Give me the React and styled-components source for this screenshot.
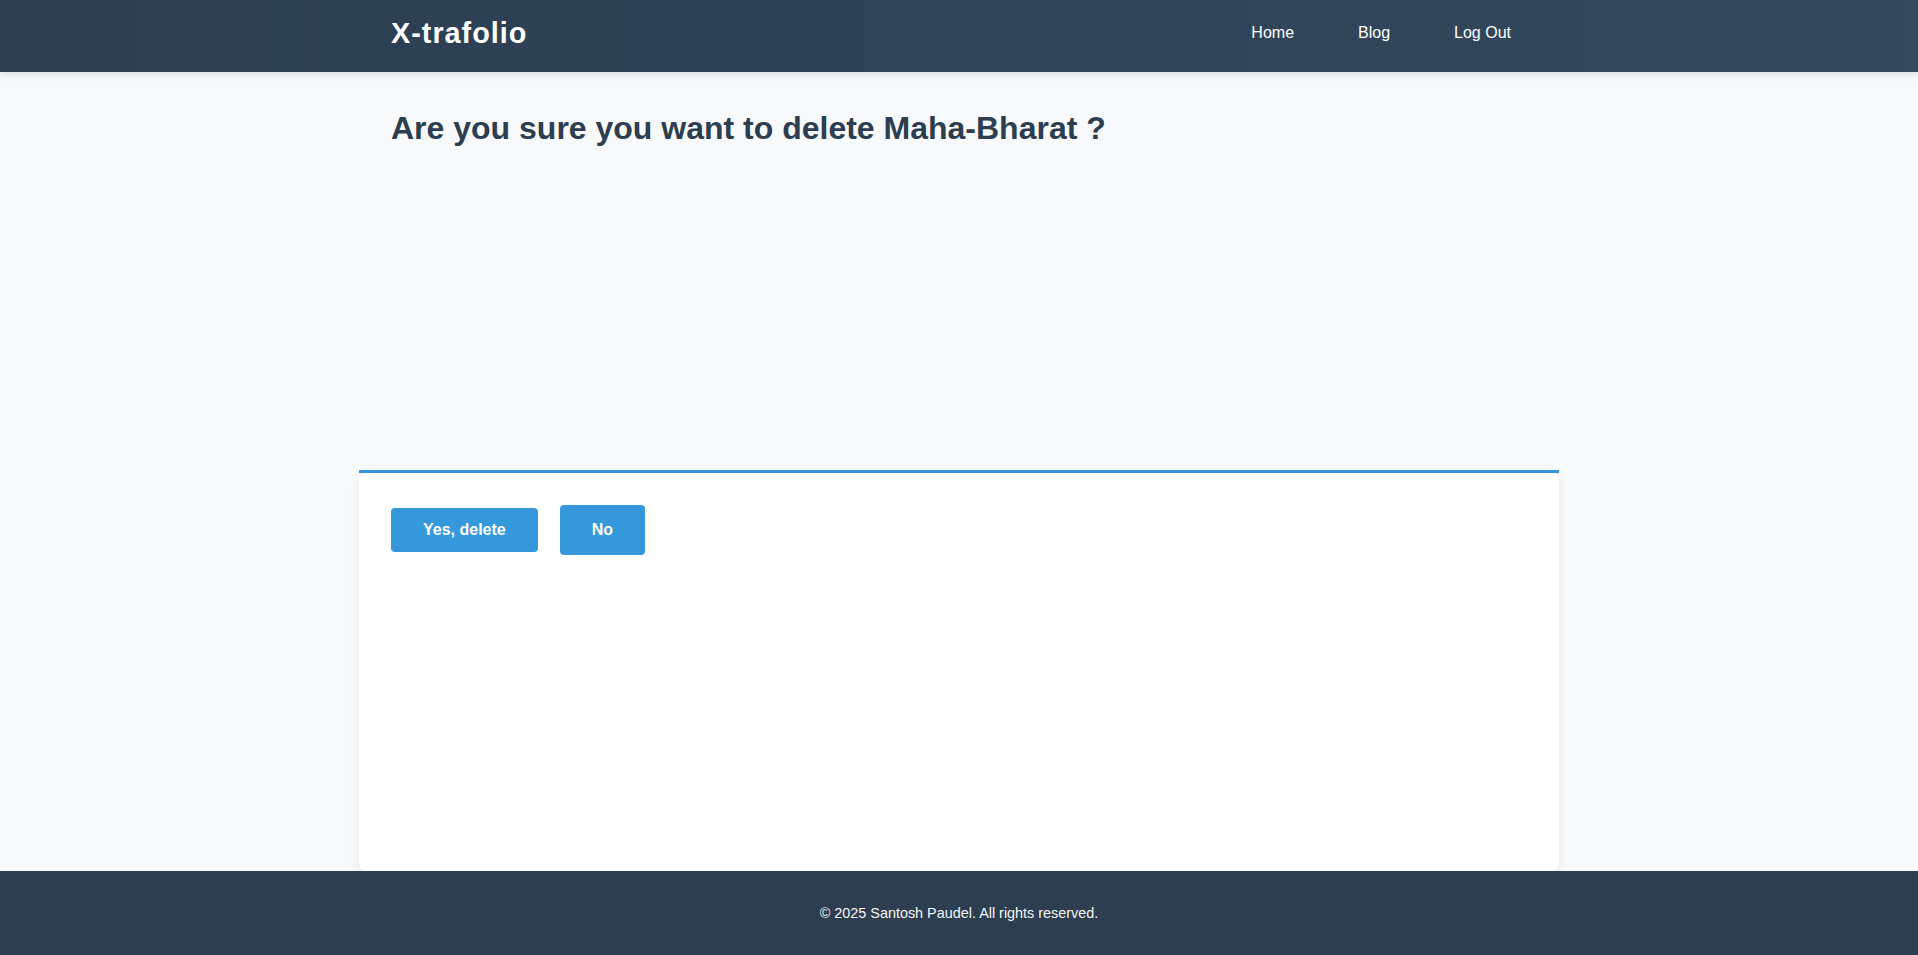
import React from 'react';
import styled, { createGlobalStyle } from 'styled-components';

const GlobalStyle = createGlobalStyle`
  * { box-sizing: border-box; }
  body {
    margin: 0;
    font-family: "Liberation Sans", Arial, sans-serif;
    background: #f8f9fa;
    color: #2c3e50;
  }
  #root {
    min-height: 100vh;
    display: flex;
    flex-direction: column;
  }
`;

const Header = styled.header`
  height: 72px;
  background: linear-gradient(90deg, #2c3e50, #34495e);
  box-shadow: 0 2px 8px rgba(0, 0, 0, 0.12);
  position: relative;
  z-index: 1;
`;

const Container = styled.div`
  max-width: 1200px;
  width: 100%;
  margin: 0 auto;
`;

const HeaderInner = styled(Container)`
  height: 66px;
  padding: 0 32px;
  display: flex;
  align-items: center;
  justify-content: space-between;
`;

const Logo = styled.a`
  color: #fff;
  font-size: 28.8px;
  font-weight: 700;
  letter-spacing: 1px;
  text-decoration: none;
`;

const Nav = styled.nav`
  display: flex;
  gap: 32px;
`;

const NavLink = styled.a`
  color: #fff;
  font-size: 16px;
  padding: 8px 16px;
  text-decoration: none;
`;

const Main = styled(Container)`
  flex: 1;
  display: flex;
  flex-direction: column;
`;

const TitleBlock = styled.div`
  height: 398px;
  padding: 38px 32px 0;
`;

const Title = styled.h1`
  margin: 0;
  font-size: 32px;
  font-weight: 700;
  color: #2c3e50;
`;

const Panel = styled.section`
  flex: 1;
  display: flex;
  border-top: 3px solid #3498db;
`;

const Card = styled.div`
  flex: 1;
  background: #fff;
  border-radius: 8px;
  box-shadow: 0 2px 10px rgba(0, 0, 0, 0.08);
  padding: 32px;
  display: flex;
  flex-direction: column;
`;

const Actions = styled.div`
  display: flex;
  align-items: center;
  gap: 22px;
`;

const Button = styled.button`
  background: #3498db;
  color: #fff;
  border: none;
  border-radius: 4px;
  font-family: inherit;
  font-size: 16px;
  font-weight: 700;
  line-height: 18.4px;
  padding: ${p => (p.$big ? '16px 32px' : '12.8px 32px')};
  cursor: pointer;
`;

const Footer = styled.footer`
  background: #2c3e50;
  color: #f4f6f7;
  text-align: center;
  font-size: 14.4px;
  padding: 34px 0;
`;

export default function App() {
  return (
    <>
      <GlobalStyle />
      <Header>
        <HeaderInner>
          <Logo href="#">X-trafolio</Logo>
          <Nav>
            <NavLink href="#">Home</NavLink>
            <NavLink href="#">Blog</NavLink>
            <NavLink href="#">Log Out</NavLink>
          </Nav>
        </HeaderInner>
      </Header>
      <Main>
        <TitleBlock>
          <Title>Are you sure you want to delete Maha-Bharat ?</Title>
        </TitleBlock>
        <Panel>
          <Card>
            <Actions>
              <Button>Yes, delete</Button>
              <Button $big>No</Button>
            </Actions>
          </Card>
        </Panel>
      </Main>
      <Footer>© 2025 Santosh Paudel. All rights reserved.</Footer>
    </>
  );
}
